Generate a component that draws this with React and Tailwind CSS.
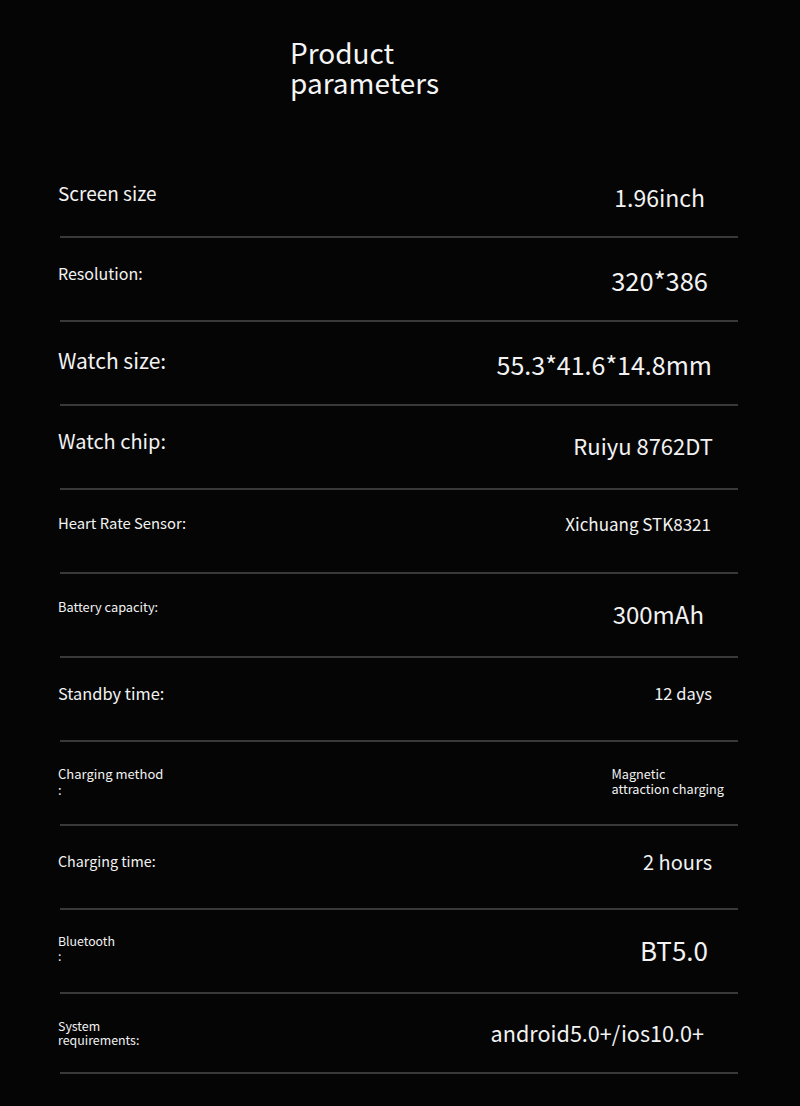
import React from "react";

const rows = [
  { label: ["Screen size"], lc: "text-[19px] leading-[23px] pt-[27px]", value: ["1.96inch"], vc: "text-[23px] leading-[28px] pt-[29px] pr-[33px]" },
  { label: ["Resolution:"], lc: "text-[16px] leading-[20px] pt-[25px]", value: ["320*386"], vc: "text-[25.5px] leading-[31px] pt-[26px] pr-[30px]" },
  { label: ["Watch size:"], lc: "text-[21px] leading-[26px] pt-[25px]", value: ["55.3*41.6*14.8mm"], vc: "text-[25px] leading-[30px] pt-[27px] pr-[26px]" },
  { label: ["Watch chip:"], lc: "text-[20px] leading-[24px] pt-[23px]", value: ["Ruiyu 8762DT"], vc: "text-[22px] leading-[26px] pt-[26px] pr-[25px]" },
  { label: ["Heart Rate Sensor:"], lc: "text-[14.8px] leading-[18px] pt-[24px]", value: ["Xichuang STK8321"], vc: "text-[17px] leading-[20px] pt-[24px] pr-[27px]" },
  { label: ["Battery capacity:"], lc: "text-[12.8px] leading-[16px] pt-[25px]", value: ["300mAh"], vc: "text-[24px] leading-[29px] pt-[25px] pr-[34px]" },
  { label: ["Standby time:"], lc: "text-[16.4px] leading-[20px] pt-[25px]", value: ["12 days"], vc: "text-[16.5px] leading-[20px] pt-[25px] pr-[26px]" },
  { label: ["Charging method", ":"], lc: "text-[13px] leading-[16px] pt-[24px]", value: ["Magnetic", "attraction charging"], vc: "text-[12.7px] leading-[15px] pt-[24px] pr-[14px] whitespace-nowrap text-left", left: true },
  { label: ["Charging time:"], lc: "text-[14.3px] leading-[18px] pt-[26px]", value: ["2 hours"], vc: "text-[20px] leading-[24px] pt-[24px] pr-[26px]" },
  { label: ["Bluetooth", ":"], lc: "text-[12.3px] leading-[15px] pt-[24px]", value: ["BT5.0"], vc: "text-[26px] leading-[31px] pt-[24px] pr-[30px]" },
  { label: ["System", "requirements:"], lc: "text-[12.4px] leading-[14px] pt-[25px]", value: ["android5.0+/ios10.0+"], vc: "text-[21.6px] leading-[26px] pt-[26px] pr-[34px]", last: true },
];

export default function App() {
  return (
    <div
      className="w-[800px] h-[1106px] bg-[#050505] text-[#f2f2f2] overflow-hidden"
      style={{ fontFamily: '"Noto Sans CJK SC", "Noto Sans", sans-serif' }}
    >
      <div className="pt-[37px] pl-[290px] text-[28px] leading-[30px] text-[#f5f5f5]">
        <div>Product</div>
        <div>parameters</div>
      </div>
      <div className="mt-[57px] ml-[60px] w-[678px]">
        {rows.map((r, i) => (
          <div
            key={i}
            className={`flex justify-between border-b-2 border-[#393939] ${r.last ? "h-[80px]" : "h-[84px]"}`}
          >
            <div className={`-ml-[2px] ${r.lc}`}>
              {r.label.map((t, j) => (
                <div key={j}>{t}</div>
              ))}
            </div>
            <div className={`${r.left ? "" : "text-right"} ${r.vc}`}>
              {r.value.map((t, j) => (
                <div key={j}>{t}</div>
              ))}
            </div>
          </div>
        ))}
      </div>
    </div>
  );
}
